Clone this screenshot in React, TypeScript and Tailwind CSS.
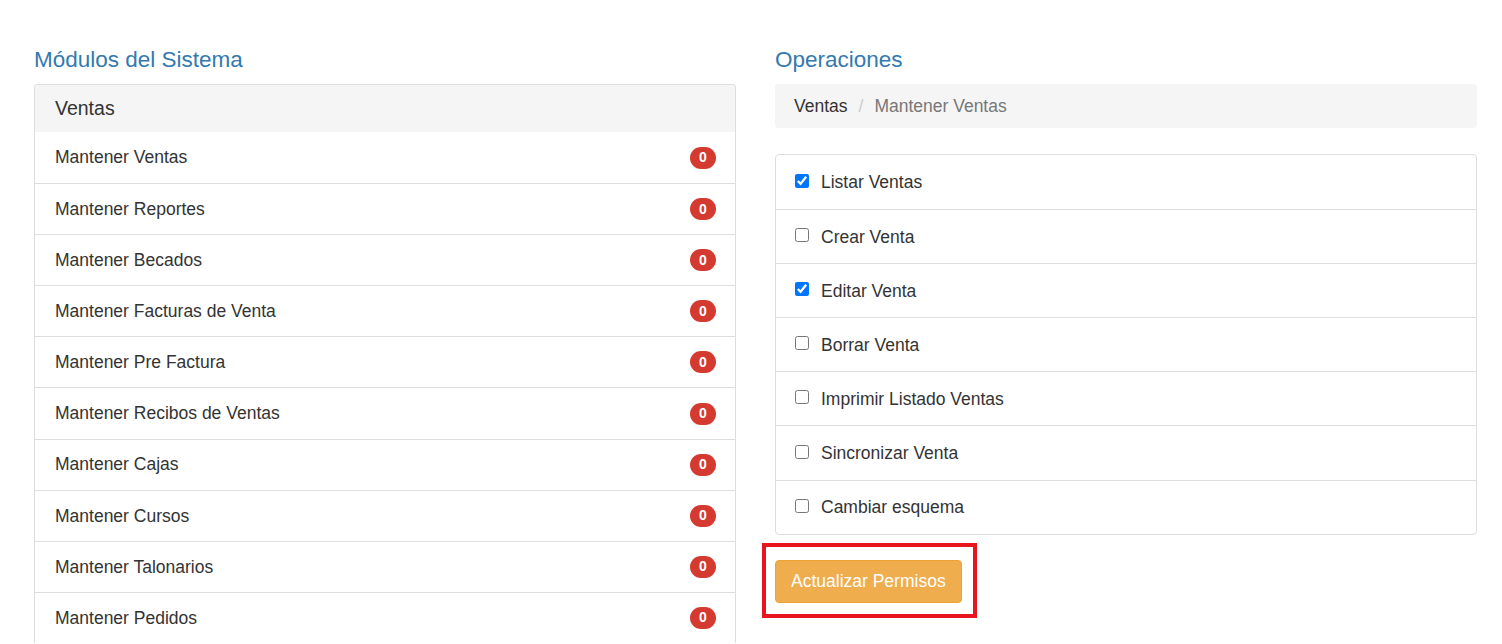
import React from "react";

const modules = [
  "Mantener Ventas",
  "Mantener Reportes",
  "Mantener Becados",
  "Mantener Facturas de Venta",
  "Mantener Pre Factura",
  "Mantener Recibos de Ventas",
  "Mantener Cajas",
  "Mantener Cursos",
  "Mantener Talonarios",
  "Mantener Pedidos",
];

const ops: [string, boolean][] = [
  ["Listar Ventas", true],
  ["Crear Venta", false],
  ["Editar Venta", true],
  ["Borrar Venta", false],
  ["Imprimir Listado Ventas", false],
  ["Sincronizar Venta", false],
  ["Cambiar esquema", false],
];

export default function App() {
  return (
    <div
      className="h-[644px] overflow-hidden bg-white text-[#333]"
      style={{ fontFamily: '"Liberation Sans", Arial, sans-serif' }}
    >
      <div className="grid grid-cols-[702px_702px] gap-x-[39px] pl-[34px] pt-[47px]">
        {/* Left column */}
        <div>
          <h3 className="text-[22.5px] leading-[26px] text-[#3379b0] mb-[11px]">Módulos del Sistema</h3>
          <div className="border border-b-0 border-[#ddd] rounded-t-[4px]">
            <div className="h-[47px] bg-[#f5f5f5] flex items-center pl-[20px] text-[19.5px] rounded-t-[4px]">
              Ventas
            </div>
            {modules.map((m, i) => (
              <div
                key={m}
                className={`h-[51.1px] flex items-center justify-between pl-[20px] pr-[19px] text-[17.5px] ${
                  i > 0 ? "border-t border-[#ddd]" : ""
                }`}
              >
                <span>{m}</span>
                <span className="inline-flex items-center justify-center w-[26px] h-[22px] rounded-full bg-[#d43a2f] text-white text-[14px] font-bold">
                  0
                </span>
              </div>
            ))}
          </div>
        </div>

        {/* Right column */}
        <div>
          <h3 className="text-[22.5px] leading-[26px] text-[#3379b0] mb-[11px]">Operaciones</h3>
          <div className="h-[44px] bg-[#f5f5f5] rounded-[4px] flex items-center pl-[19px] text-[17.5px]">
            <span className="text-[#333]">Ventas</span>
            <span className="text-[#ccc] px-[11px]">/</span>
            <span className="text-[#777]">Mantener Ventas</span>
          </div>
          <div className="mt-[26px] border border-[#ddd] rounded-[4px]">
            {ops.map(([label, checked], i) => (
              <label
                key={label}
                className={`h-[54.1px] flex items-center pl-[19px] text-[17.5px] ${
                  i > 0 ? "border-t border-[#ddd]" : ""
                }`}
              >
                <input
                  type="checkbox"
                  defaultChecked={checked}
                  className="w-[14px] h-[14px] m-0 mr-[12px] mt-[-3px]"
                />
                <span>{label}</span>
              </label>
            ))}
          </div>
          <div className="mt-[25px] relative inline-block">
            <button className="h-[43px] px-[15px] bg-[#f0ad4e] border border-[#eea236] rounded-[4px] text-white text-[17.5px]">
              Actualizar Permisos
            </button>
            <div className="absolute -left-[13px] -top-[17px] -right-[15px] -bottom-[15px] border-[4px] border-[#e8141e] pointer-events-none" />
          </div>
        </div>
      </div>
    </div>
  );
}
